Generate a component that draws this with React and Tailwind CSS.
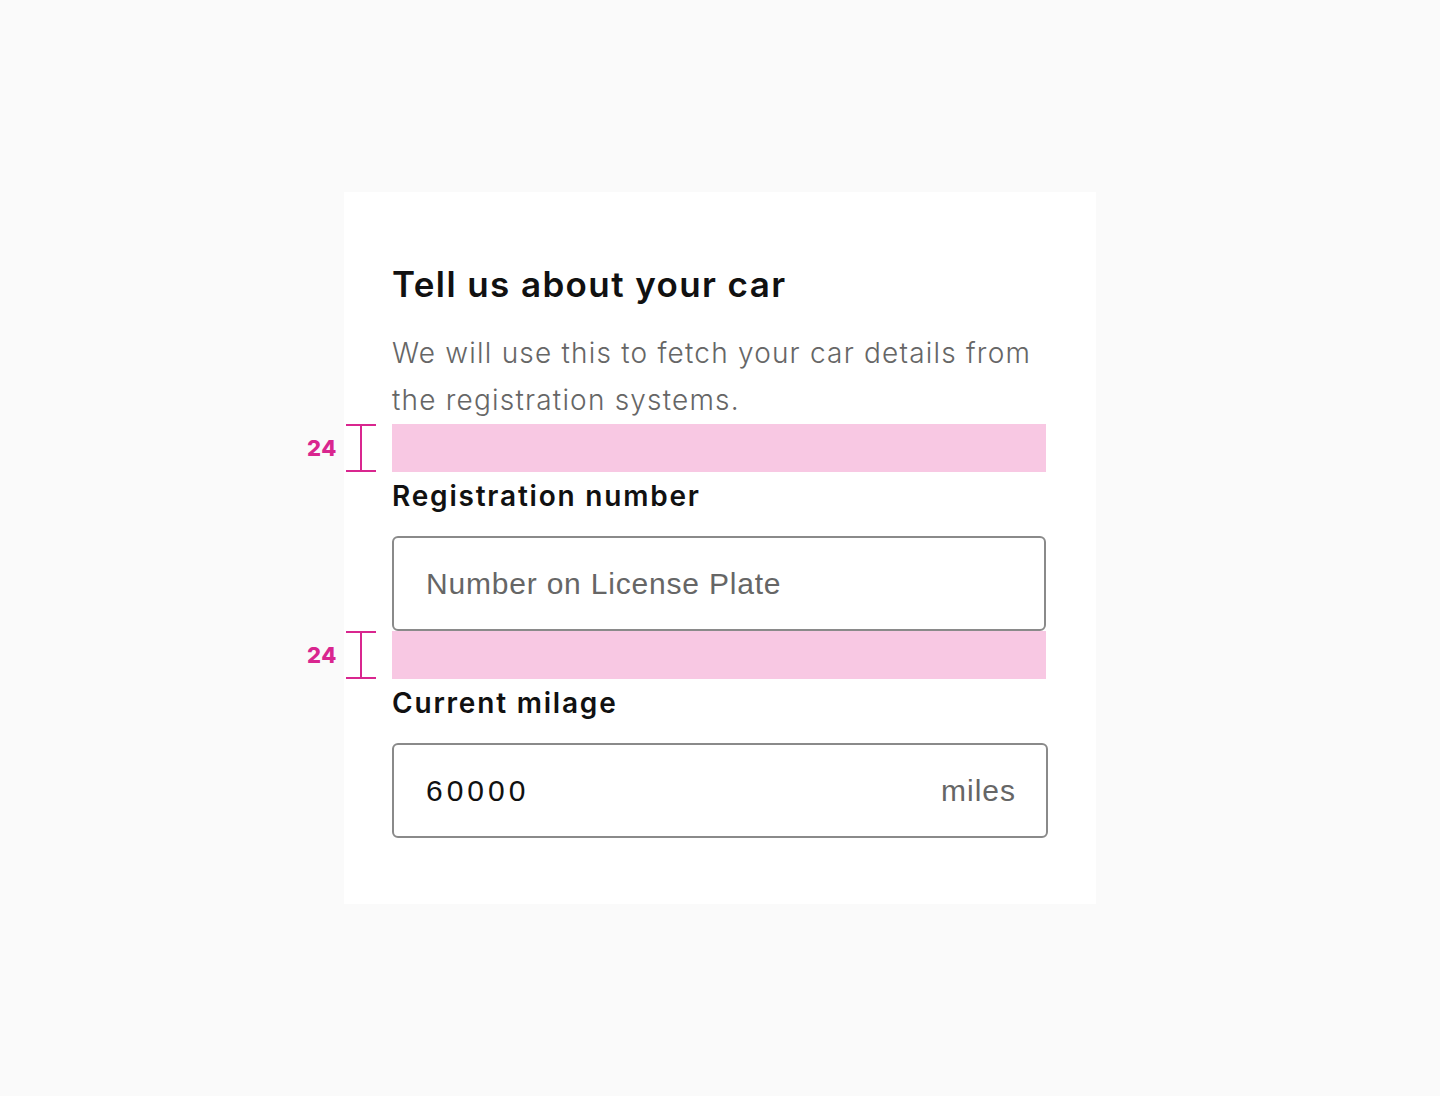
import { useState } from "react";

function Spacer({ label }) {
  return (
    <div className="relative h-12 w-[654px] bg-[#f8c8e3]">
      {/* spacing marker */}
      <div className="absolute -left-[46px] top-0 h-12 w-[30px]">
        <div className="absolute left-0 top-0 h-[2px] w-[30px] bg-[#d9268f]" />
        <div className="absolute left-[14px] top-0 h-12 w-[2px] bg-[#d9268f]" />
        <div className="absolute left-0 bottom-0 h-[2px] w-[30px] bg-[#d9268f]" />
      </div>
      <span className="absolute -left-[85px] top-[12px] font-['Inter',sans-serif] text-[22px] font-extrabold leading-6 tracking-[0.5px] text-[#d9268f]">
        {label}
      </span>
    </div>
  );
}

export default function App() {
  const [reg, setReg] = useState("");
  const [miles, setMiles] = useState("60000");

  return (
    <div className="min-h-[1096px] bg-[#fafafa] pt-[192px]">
      <div className="mx-auto h-[712px] w-[752px] bg-white px-12 pt-[68px] font-['Inter',sans-serif]">
        <h1 className="text-[35px] font-semibold leading-[48px] tracking-[1.4px] text-[#111]">
          Tell us about your car
        </h1>
        <p className="mt-[22px] text-[28px] font-light leading-[47px] tracking-[1.2px] text-[#666]">
          We will use this to fetch your car details from the registration
          systems.
        </p>

        <Spacer label="24" />

        <label className="block text-[28px] font-semibold leading-[48px] tracking-[1.8px] text-[#111]">
          Registration number
        </label>
        <input
          type="text"
          value={reg}
          onChange={(e) => setReg(e.target.value)}
          placeholder="Number on License Plate"
          className="mt-4 block h-[95px] w-[654px] rounded-md border-2 border-[#8a8a8a] bg-white px-8 font-['Liberation_Sans',sans-serif] text-[30px] tracking-[0.8px] text-[#111] outline-none placeholder:text-[#666]"
        />

        <Spacer label="24" />

        <label className="block text-[28px] font-semibold leading-[48px] tracking-[1.8px] text-[#111]">
          Current milage
        </label>
        <div className="mt-4 flex h-[95px] w-[656px] items-center rounded-md border-2 border-[#8a8a8a] bg-white pl-8 pr-[30px]">
          <input
            type="text"
            value={miles}
            onChange={(e) => setMiles(e.target.value)}
            className="min-w-0 flex-1 bg-transparent font-['Liberation_Sans',sans-serif] text-[30px] tracking-[4px] text-[#111] outline-none"
          />
          <span className="font-['Liberation_Sans',sans-serif] text-[30px] tracking-[1px] text-[#666]">
            miles
          </span>
        </div>
      </div>
    </div>
  );
}
